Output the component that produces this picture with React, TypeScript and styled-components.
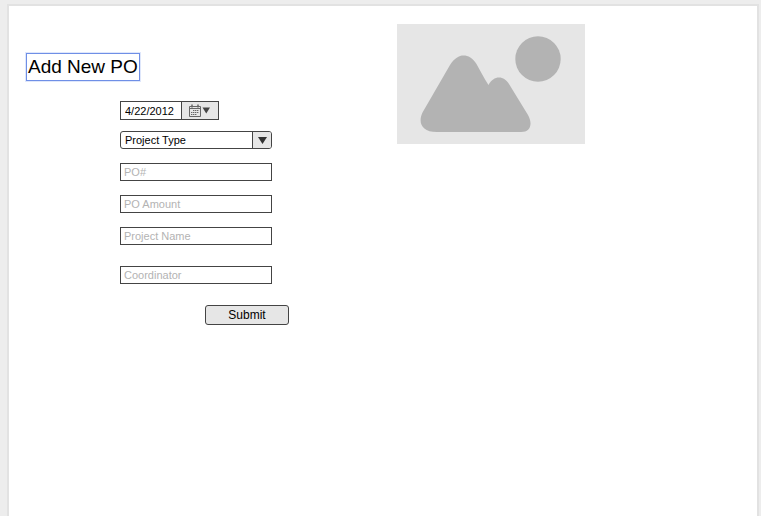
import React from "react";
import styled, { createGlobalStyle } from "styled-components";

const GlobalStyle = createGlobalStyle`
  *, *::before, *::after { box-sizing: border-box; }
  body {
    margin: 0;
    background: #ededed;
    color: #000;
    font-family: "Liberation Sans", Arial, sans-serif;
    font-size: 11px;
  }
  button, input, select { font: inherit; color: inherit; margin: 0; }
`;

const Canvas = styled.div`
  min-height: 100vh;
  display: flex;
  padding: 4px 2px 0 7px;
`;

const Page = styled.main`
  flex: 1;
  display: grid;
  grid-template-columns: minmax(263px, 371px) minmax(0, 1fr);
  align-items: start;
  background: #fff;
  border: 2px solid #e2e2e2;
  border-bottom: 0;
  padding: 18px 17px;
`;

const Entry = styled.section`
  padding-top: 29px;
`;

const Title = styled.h1`
  width: fit-content;
  margin: 0;
  padding: 0 1px;
  border: 1px solid #6f8fe6;
  box-shadow: 0 0 0 1px #dfe7fb;
  font-size: 19px;
  font-weight: 400;
  line-height: 26px;
  white-space: nowrap;
`;

const Form = styled.form`
  display: flex;
  flex-direction: column;
  align-items: flex-start;
  width: 169px;
  margin: 20px 0 0 94px;
`;

const Outline = styled.div`
  display: flex;
  height: 19px;
  border: 1px solid #444;
  background: #fff;
`;

const DateBox = styled(Outline)`
  width: 99px;
  margin-bottom: 11px;
`;

const DateInput = styled.input`
  flex: 1;
  min-width: 0;
  padding: 0 4px;
  border: 0;
  background: transparent;
  outline: 0;
`;

const PickButton = styled.button`
  display: flex;
  align-items: center;
  justify-content: center;
  width: 37px;
  padding: 0;
  border: 0;
  border-left: 1px solid #444;
  background: #e6e6e6;
`;

const SelectBox = styled(Outline)`
  position: relative;
  width: 152px;
  height: 18px;
  margin-bottom: 14px;
  border-radius: 3px;
  overflow: hidden;
`;

const Select = styled.select`
  appearance: none;
  flex: 1;
  padding: 0 22px 0 4px;
  border: 0;
  background: transparent;
  outline: 0;
`;

const SelectArrow = styled.span`
  position: absolute;
  inset: 0 0 0 auto;
  display: flex;
  align-items: center;
  justify-content: center;
  width: 19px;
  border-left: 1px solid #444;
  background: #e6e6e6;
  pointer-events: none;
`;

const TextInput = styled.input<{ $gap: number }>`
  width: 152px;
  height: 18px;
  margin-bottom: ${(p) => p.$gap}px;
  padding: 0 3px;
  border: 1px solid #444;
  border-radius: 0;
  background: #fff;
  outline: 0;
  &::placeholder { color: #b3b3b3; opacity: 1; }
`;

const Submit = styled.button`
  align-self: flex-end;
  width: 84px;
  height: 20px;
  padding: 0 0 1px;
  border: 1px solid #444;
  border-radius: 3px;
  background: #e6e6e6;
  font-size: 12px;
`;

const Picture = styled.svg`
  display: block;
  width: 188px;
  max-width: 100%;
  height: auto;
`;

const FIELDS = [
  { label: "PO#", gap: 14 },
  { label: "PO Amount", gap: 14 },
  { label: "Project Name", gap: 21 },
  { label: "Coordinator", gap: 21 },
];

function CalendarIcon() {
  return (
    <svg width="22" height="13" viewBox="0 0 22 13" aria-hidden="true">
      <path d="M.5 2.500h11v10H.5zM.5 4.500h11" fill="none" stroke="#666" />
      <path d="M3 .5v3M9 .5v3" stroke="#666" strokeWidth="1.500" />
      <path d="M4 6.500h6M2 8.500h8M2 10.500h6" stroke="#666" strokeDasharray="1.400 .6" />
      <path d="M13.500 3.500h7.500l-3.750 6z" fill="#444" />
    </svg>
  );
}

export default function App() {
  return (
    <>
      <GlobalStyle />
      <Canvas>
        <Page>
          <Entry>
            <Title>Add New PO</Title>
            <Form onSubmit={(e) => e.preventDefault()}>
              <DateBox>
                <DateInput aria-label="Date" defaultValue="4/22/2012" />
                <PickButton type="button" aria-label="Choose date">
                  <CalendarIcon />
                </PickButton>
              </DateBox>
              <SelectBox>
                <Select aria-label="Project Type">
                  <option>Project Type</option>
                </Select>
                <SelectArrow>
                  <svg width="9" height="7" viewBox="0 0 9 7" aria-hidden="true">
                    <path d="M0 0h9L4.500 7z" fill="#333" />
                  </svg>
                </SelectArrow>
              </SelectBox>
              {FIELDS.map((f) => (
                <TextInput key={f.label} aria-label={f.label} placeholder={f.label} $gap={f.gap} />
              ))}
              <Submit type="submit">Submit</Submit>
            </Form>
          </Entry>
          <Picture viewBox="0 0 188 120" role="img" aria-label="Image placeholder">
            <path d="M0 0h188v120H0z" fill="#e6e6e6" />
            <circle cx="141" cy="35" r="22.700" fill="#b3b3b3" />
            <path
              d="M53 41C57.500 34 62 31.500 66.500 31.500S76 34 79.500 40C83 46 87 54.500 91.500 61C94 56 98 53.500 102 53.500S109.500 56 112 60L131 91C136 100 133.500 108 124 108H40C24 108 21 98 25.500 88.500Z"
              fill="#b3b3b3"
            />
          </Picture>
        </Page>
      </Canvas>
    </>
  );
}
